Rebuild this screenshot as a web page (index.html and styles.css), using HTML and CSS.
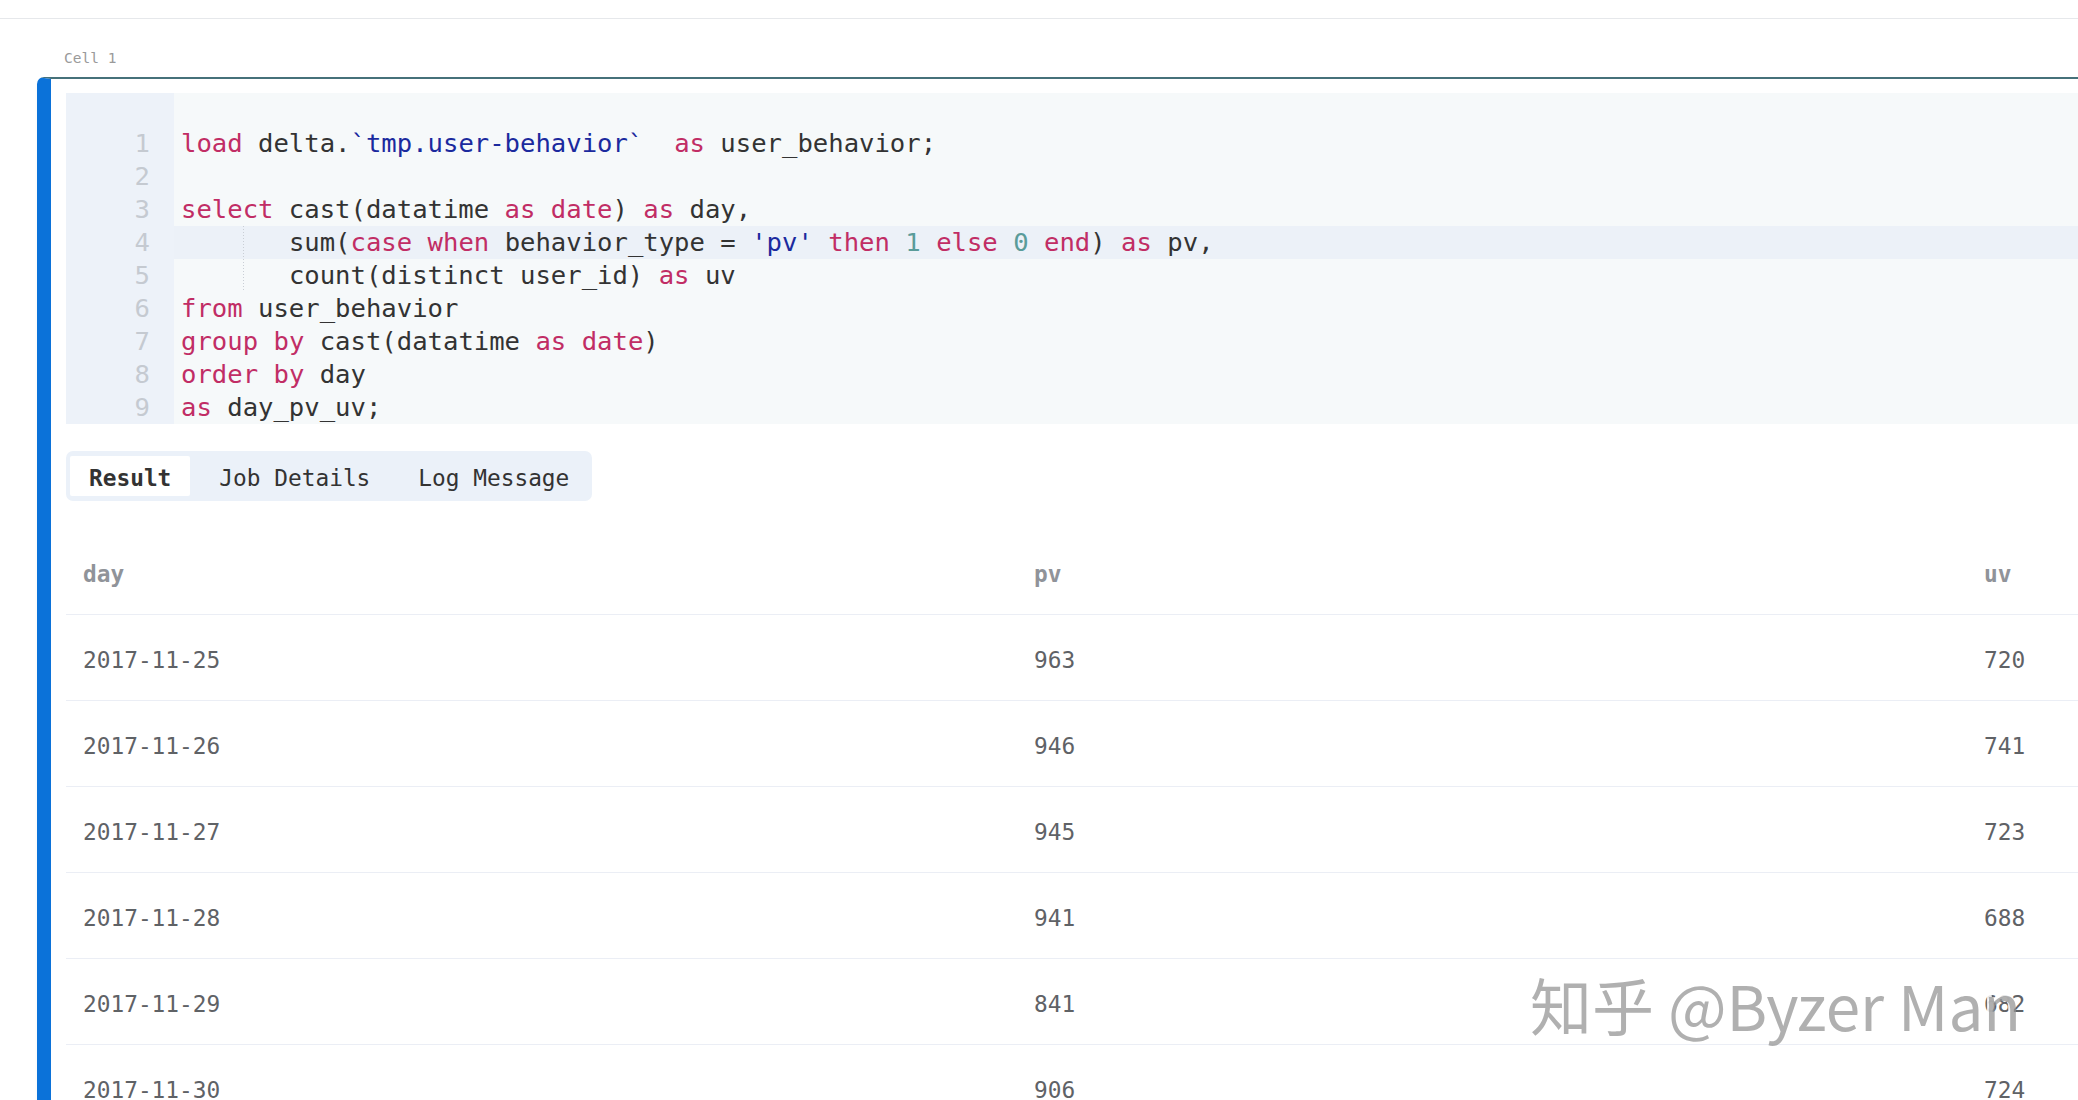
FILE: index.html
```html
<!DOCTYPE html>
<html lang="zh-CN">
<head>
    <meta charset="UTF-8">
    <meta name="viewport" content="width=device-width, initial-scale=1.0">
    <title>Notebook - Cell 1</title>
    <link rel="stylesheet" href="styles.css">
</head>
<body>
    <div class="topbar"></div>

    <div class="notebook">
        <div class="cell-label">Cell 1</div>

        <div class="cell">
            <div class="editor">
                <div class="gutter">
                    <div>1</div><div>2</div><div>3</div><div>4</div><div>5</div><div>6</div><div>7</div><div>8</div><div>9</div>
                </div>
                <div class="code">
                    <div class="line"><span class="kw">load</span> delta.<span class="str">`tmp.user-behavior`</span>  <span class="kw">as</span> user_behavior;</div>
                    <div class="line"> </div>
                    <div class="line"><span class="kw">select</span> cast(datatime <span class="kw">as</span> <span class="kw">date</span>) <span class="kw">as</span> day,</div>
                    <div class="line active"><span>    </span><span class="guide">   </span>sum(<span class="kw">case</span> <span class="kw">when</span> behavior_type = <span class="str">'pv'</span> <span class="kw">then</span> <span class="num">1</span> <span class="kw">else</span> <span class="num">0</span> <span class="kw">end</span>) <span class="kw">as</span> pv,</div>
                    <div class="line"><span>    </span><span class="guide">   </span>count(distinct user_id) <span class="kw">as</span> uv</div>
                    <div class="line"><span class="kw">from</span> user_behavior</div>
                    <div class="line"><span class="kw">group</span> <span class="kw">by</span> cast(datatime <span class="kw">as</span> <span class="kw">date</span>)</div>
                    <div class="line"><span class="kw">order</span> <span class="kw">by</span> day</div>
                    <div class="line"><span class="kw">as</span> day_pv_uv;</div>
                </div>
            </div>

            <div class="tabs">
                <div class="tab active">Result</div>
                <div class="tab">Job Details</div>
                <div class="tab">Log Message</div>
            </div>

            <table class="result">
                <colgroup>
                    <col class="col-day">
                    <col class="col-pv">
                    <col>
                </colgroup>
                <thead>
                    <tr><th>day</th><th>pv</th><th>uv</th></tr>
                </thead>
                <tbody>
                    <tr><td>2017-11-25</td><td>963</td><td>720</td></tr>
                    <tr><td>2017-11-26</td><td>946</td><td>741</td></tr>
                    <tr><td>2017-11-27</td><td>945</td><td>723</td></tr>
                    <tr><td>2017-11-28</td><td>941</td><td>688</td></tr>
                    <tr><td>2017-11-29</td><td>841</td><td>682</td></tr>
                    <tr><td>2017-11-30</td><td>906</td><td>724</td></tr>
                </tbody>
            </table>
        </div>
    </div>

    <div class="watermark">知乎 @Byzer Man</div>
</body>
</html>
```

FILE: styles.css
```css
html, body {
    margin: 0;
    overflow: hidden;
}

body {
    width: 2078px;
    height: 1100px;
    background: #ffffff;
    font-family: 'DejaVu Sans Mono', 'Liberation Mono', monospace;
    color: #333;
    position: relative;
}

.topbar {
    height: 18px;
    border-bottom: 1px solid #e6e8eb;
}

.notebook {
    padding-left: 37px;
}

.cell-label {
    margin-top: 29px;
    margin-bottom: 9px;
    padding-left: 27px;
    font-size: 14.5px;
    line-height: 20px;
    color: #9a9a9a;
}

.cell {
    border-left: 14px solid #0b72d9;
    border-top: 2px solid #46717a;
    border-top-left-radius: 7px;
    padding: 14px 0 0 15px;
    box-shadow: 0 2px 3px rgba(70, 113, 122, 0.06);
}

/* editor */
.editor {
    display: grid;
    grid-template-columns: 108px 1fr;
    background: #f6f9fa;
    font-size: 25.6px;
    line-height: 33px;
}

.gutter {
    background: #edf2f9;
    padding: 34px 24px 0 0;
    text-align: right;
    color: #c5cad1;
}

.code {
    padding-top: 34px;
    color: #333;
}

.line {
    height: 33px;
    padding-left: 7px;
    white-space: pre;
}

.line.active {
    background: #ecf1f8;
}

.guide {
    display: inline-block;
    height: 33px;
    background: repeating-linear-gradient(to bottom, #c9ced5 0 1px, transparent 1px 3px) left top / 1px 100% no-repeat;
}

.kw {
    color: #c12d65;
}

.str {
    color: #1b2a9e;
}

.num {
    color: #5a9c9a;
}

/* tabs */
.tabs {
    display: inline-flex;
    gap: 10px;
    margin-top: 27px;
    padding: 5px 4px;
    background: #ebf1f9;
    border-radius: 7px;
}

.tab {
    padding: 2px 19px 0;
    height: 38px;
    line-height: 40px;
    font-size: 22.8px;
    color: #333;
}

.tab.active {
    background: #ffffff;
    font-weight: bold;
    border-radius: 2px;
}

/* result table */
.result {
    width: 100%;
    margin-top: 28px;
    border-collapse: collapse;
    table-layout: fixed;
    font-size: 22.8px;
}

.col-day {
    width: 951px;
}

.col-pv {
    width: 950px;
}

.result th,
.result td {
    height: 81px;
    padding: 4px 0 0 17px;
    text-align: left;
    border-bottom: 1px solid #ebeef5;
    white-space: nowrap;
}

.result th {
    color: #909399;
    font-weight: bold;
}

.result td {
    color: #5f6266;
}

.watermark {
    position: absolute;
    left: 1530px;
    top: 968px;
    font-family: 'Noto Sans CJK SC', 'Noto Sans', sans-serif;
    font-size: 62px;
    line-height: 72px;
    color: rgba(150, 150, 150, 0.75);
    text-shadow: -2px -2px 0 rgba(255, 255, 255, 0.85);
    white-space: nowrap;
}
```
